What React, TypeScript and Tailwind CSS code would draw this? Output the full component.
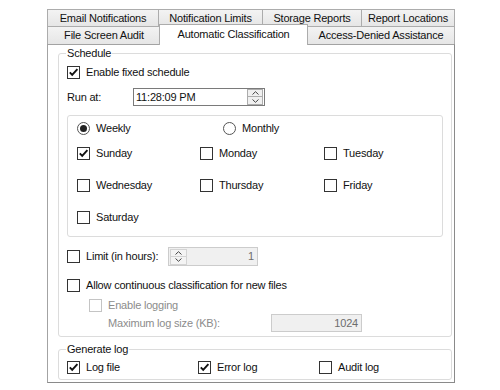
import clsx from "clsx";

const Check = ({ checked = false, disabled = false }: { checked?: boolean; disabled?: boolean }) => (
  <span
    className={clsx(
      "w-[13px] h-[13px] border flex items-center justify-center bg-white shrink-0",
      disabled ? "border-[#c4c4c4]" : "border-[#333333]"
    )}
  >
    {checked && (
      <svg width="11" height="11" viewBox="0 0 11 11">
        <path d="M1.8 5.4 L4.2 7.9 L9.4 2.2" stroke="#111" strokeWidth="1.9" fill="none" />
      </svg>
    )}
  </span>
);

const Radio = ({ checked = false }: { checked?: boolean }) => (
  <span className="w-[13px] h-[13px] rounded-full border border-[#555555] flex items-center justify-center bg-white shrink-0">
    {checked && <span className="w-[7px] h-[7px] rounded-full bg-[#222]" />}
  </span>
);

const Chevron = ({ down = false }: { down?: boolean }) => (
  <svg width="7" height="4" viewBox="0 0 7 4" className={clsx(down && "rotate-180")}>
    <path d="M0.5 3.5 L3.5 0.7 L6.5 3.5" stroke="#444" strokeWidth="1" fill="none" />
  </svg>
);

const Option = ({
  label,
  checked,
  className,
}: {
  label: string;
  checked?: boolean;
  className?: string;
}) => (
  <div className={clsx("flex items-center gap-[6px] h-[16px]", className)}>
    <Check checked={checked} />
    <span>{label}</span>
  </div>
);

const Tab = ({ label, className }: { label: string; className?: string }) => (
  <div
    className={clsx(
      "flex items-center justify-center border border-b-0 border-[#acacac] bg-linear-to-b from-[#f3f3f3] to-[#e6e6e6] whitespace-nowrap",
      className
    )}
  >
    {label}
  </div>
);

export default function App() {
  return (
    <div className="w-[500px] h-[390px] bg-white pt-[9px] pl-[47px] text-[11px] leading-[15px] tracking-[-0.2px] text-[#111] font-['Liberation_Sans',Arial,sans-serif]">
      <div className="w-[408px]">
        {/* tab rows */}
        <div className="flex h-[17px]">
          <Tab label="Email Notifications" className="w-[112px] h-[17px]" />
          <Tab label="Notification Limits" className="w-[105px] h-[17px] -ml-px" />
          <Tab label="Storage Reports" className="w-[100px] h-[17px] -ml-px" />
          <Tab label="Report Locations" className="w-[94px] h-[17px] -ml-px" />
        </div>
        <div className="flex items-start h-[18px]">
          <Tab label="File Screen Audit" className="w-[114px] h-[18px]" />
          <div className="relative z-10 -ml-[2px] -mt-[2px] w-[149px] h-[21px] flex items-center justify-center border border-b-0 border-[#acacac] bg-white pb-[2px]">
            Automatic Classification
          </div>
          <Tab label="Access-Denied Assistance" className="w-[148px] h-[18px] -ml-px" />
        </div>

        {/* panel */}
        <div className="border border-[#a3a3a3] border-r-[#8a8a8a] border-b-[#8a8a8a] bg-white pl-[10px] pb-[2px]">
          <fieldset className="mt-px w-[394px] border border-[#dcdcdc] rounded-[3px] pb-[4px]">
            <legend className="ml-[7px] px-[1px]">Schedule</legend>

            <div className="pl-[8px]">
              <Option label="Enable fixed schedule" checked className="mt-[3px]" />

              <div className="mt-[8px] flex items-center h-[18px]">
                <span className="w-[66px]">Run at:</span>
                <div className="w-[132px] h-[18px] border border-[#7a7a7a] flex items-center justify-between pl-[2px]">
                  <span>11:28:09 PM</span>
                  <div className="flex flex-col mr-px">
                    <span className="w-[16px] h-[8px] border border-[#acacac] bg-[#f0f0f0] flex items-center justify-center">
                      <Chevron />
                    </span>
                    <span className="w-[16px] h-[8px] border border-t-0 border-[#acacac] bg-[#f0f0f0] flex items-center justify-center">
                      <Chevron down />
                    </span>
                  </div>
                </div>
              </div>

              {/* days */}
              <fieldset className="mt-[9px] w-[376px] border border-[#dcdcdc] rounded-[3px] pt-[4px] pb-[11px] pl-[9px]">
                <div className="flex h-[16px] items-center">
                  <div className="w-[146px] flex items-center gap-[6px]">
                    <Radio checked />
                    <span>Weekly</span>
                  </div>
                  <div className="flex items-center gap-[6px]">
                    <Radio />
                    <span>Monthly</span>
                  </div>
                </div>
                <div className="grid grid-cols-[123px_124px_1fr] gap-y-[16px] mt-[9px]">
                  <Option label="Sunday" checked />
                  <Option label="Monday" />
                  <Option label="Tuesday" />
                  <Option label="Wednesday" />
                  <Option label="Thursday" />
                  <Option label="Friday" />
                  <Option label="Saturday" />
                </div>
              </fieldset>

              <div className="mt-[10px] flex items-center h-[19px]">
                <div className="w-[101px] flex items-center gap-[6px]">
                  <Check />
                  <span>Limit (in hours):</span>
                </div>
                <div className="w-[90px] h-[19px] border border-[#cccccc] bg-[#f0f0f0] flex items-center justify-between">
                  <div className="flex flex-col ml-px">
                    <span className="w-[17px] h-[8px] border border-[#d4d4d4] bg-[#f4f4f4] flex items-center justify-center">
                      <Chevron />
                    </span>
                    <span className="w-[17px] h-[8px] border border-t-0 border-[#d4d4d4] bg-[#f4f4f4] flex items-center justify-center">
                      <Chevron down />
                    </span>
                  </div>
                  <span className="pr-[3px] text-[#6d6d6d]">1</span>
                </div>
              </div>

              <Option label="Allow continuous classification for new files" className="mt-[11px]" />

              <div className="mt-[4px] ml-[22px] flex items-center gap-[6px] h-[16px] text-[#8c8c8c]">
                <Check disabled />
                <span>Enable logging</span>
              </div>

              <div className="mt-px ml-[41px] flex items-center h-[18px]">
                <span className="w-[163px] text-[#8c8c8c]">Maximum log size (KB):</span>
                <div className="w-[91px] h-[18px] border border-[#cccccc] bg-[#f0f0f0] flex items-center justify-end pr-[3px] text-[#6d6d6d]">
                  1024
                </div>
              </div>
            </div>
          </fieldset>

          <fieldset className="mt-[5px] w-[394px] border border-[#dcdcdc] rounded-[3px] pb-[4px]">
            <legend className="ml-[7px] px-[1px]">Generate log</legend>
            <div className="pl-[8px] mt-[2px] flex">
              <Option label="Log file" checked className="w-[131px]" />
              <Option label="Error log" checked className="w-[121px]" />
              <Option label="Audit log" />
            </div>
          </fieldset>
        </div>
      </div>
    </div>
  );
}
